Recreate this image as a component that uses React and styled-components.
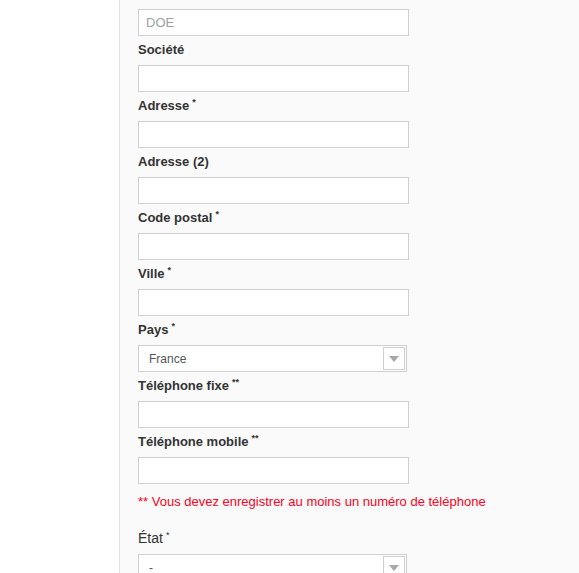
import React from "react";
import styled, { createGlobalStyle } from "styled-components";

const GlobalStyle = createGlobalStyle`
  html, body {
    margin: 0;
    padding: 0;
    background: #fafafa;
    font-family: "Liberation Sans", Arial, sans-serif;
  }
`;

const fields = [
  { label: "Société" },
  { label: "Adresse", mark: "*" },
  { label: "Adresse (2)" },
  { label: "Code postal", mark: "*" },
  { label: "Ville", mark: "*" },
  { label: "Pays", mark: "*", select: "France" },
  { label: "Téléphone fixe", mark: "**" },
  { label: "Téléphone mobile", mark: "**" },
];

const App = () => {
  return (
    <Page>
      <GlobalStyle />
      <Sidebar />
      <Main>
        <Form>
          <Input type="text" placeholder="DOE" />
          {fields.map((f) => (
            <Field key={f.label}>
              <Label>
                {f.label}
                {f.mark && <Mark>{f.mark}</Mark>}
              </Label>
              {f.select ? <Select value={f.select} /> : <Input type="text" />}
            </Field>
          ))}
          <Notice>** Vous devez enregistrer au moins un numéro de téléphone</Notice>
          <Field>
            <Label light>
              État<Mark>*</Mark>
            </Label>
            <Select value="-" />
          </Field>
        </Form>
      </Main>
    </Page>
  );
};

const Select = ({ value }) => (
  <SelectBox>
    <SelectValue>{value}</SelectValue>
    <Arrow>
      <svg width="10" height="6" viewBox="0 0 10 6">
        <path d="M0 0 L10 0 L5 6 Z" fill="#a8a8a8" />
      </svg>
    </Arrow>
  </SelectBox>
);

const Page = styled.div`
  display: flex;
  width: 100vw;
  height: 100vh;
  overflow: hidden;
`;

const Sidebar = styled.div`
  width: 119px;
  flex-shrink: 0;
  background: #ffffff;
  border-right: 1px solid #e2e2e2;
`;

const Main = styled.div`
  flex: 1;
  padding: 9px 0 0 18px;
`;

const Form = styled.div`
  width: 271px;
`;

const Field = styled.div`
  display: flex;
  flex-direction: column;
`;

const Label = styled.div`
  margin: 6px 0 8px;
  font-size: ${(p) => (p.light ? "14px" : "13px")};
  line-height: 15px;
  font-weight: ${(p) => (p.light ? "normal" : "bold")};
  color: #333;
`;

const Mark = styled.sup`
  font-size: 9px;
  margin-left: 3px;
  vertical-align: 5px;
  line-height: 0;
`;

const Input = styled.input`
  display: block;
  box-sizing: border-box;
  width: 271px;
  height: 27px;
  margin: 0;
  padding: 0 7px;
  border: 1px solid #d0d0d0;
  background: #fff;
  font-family: "Liberation Sans", Arial, sans-serif;
  font-size: 13px;
  color: #555;
  outline: none;

  &::placeholder {
    color: #a0a0a0;
  }
`;

const SelectBox = styled.div`
  box-sizing: border-box;
  width: 269px;
  height: 27px;
  display: flex;
  align-items: center;
  justify-content: space-between;
  border: 1px solid #d0d0d0;
  background: #fff;
  padding: 1px;
`;

const SelectValue = styled.span`
  padding-left: 9px;
  font-size: 12px;
  color: #555;
`;

const Arrow = styled.div`
  box-sizing: border-box;
  width: 22px;
  height: 23px;
  border: 1px solid #d0d0d0;
  display: flex;
  align-items: center;
  justify-content: center;
`;

const Notice = styled.div`
  margin: 10px 0 16px;
  font-size: 13px;
  line-height: 15px;
  color: #ff0022;
  white-space: nowrap;
`;

export default App;
